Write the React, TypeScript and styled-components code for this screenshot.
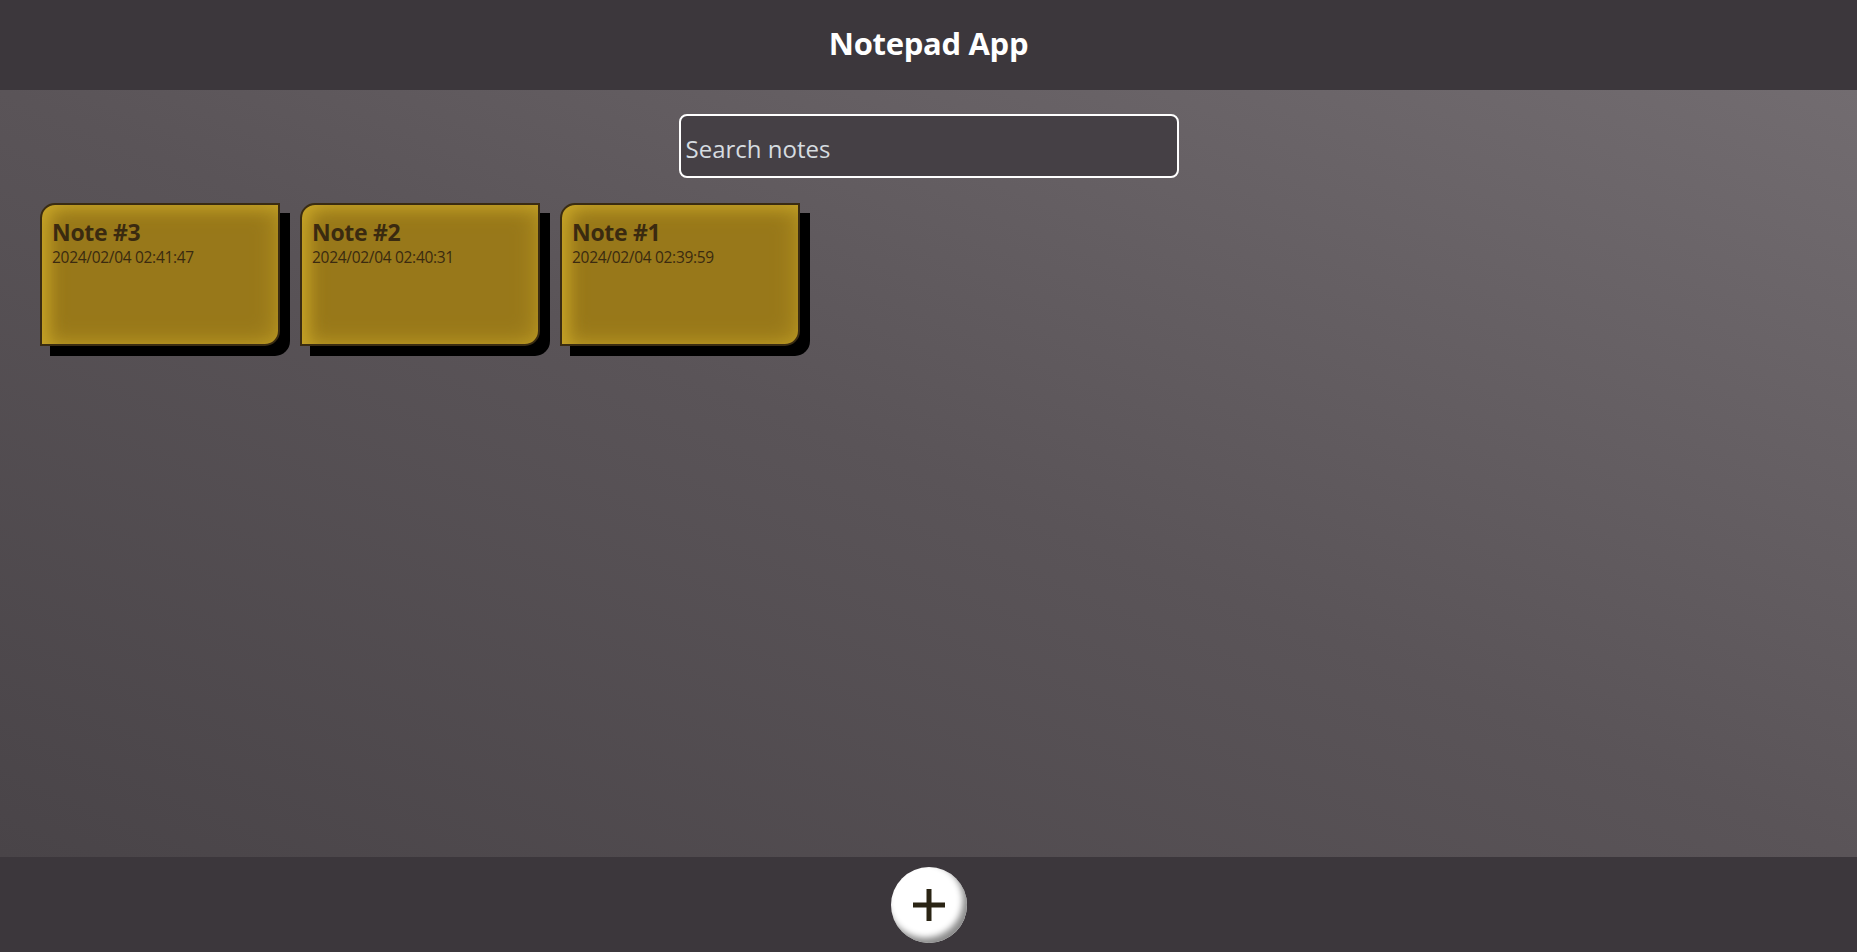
import React from "react";
import styled, { createGlobalStyle } from "styled-components";

const GlobalStyle = createGlobalStyle`
  html, body { margin: 0; padding: 0; height: 100%; }
  body { font-family: "Open Sans", "Noto Sans", sans-serif; }
  #root { height: 100%; }
  * { box-sizing: border-box; }
`;

const Page = styled.div`
  height: 952px;
  display: flex;
  flex-direction: column;
`;

const Header = styled.header`
  height: 90px;
  flex: 0 0 90px;
  background: #3c373c;
  display: flex;
  align-items: center;
  justify-content: center;
`;

const Title = styled.h1`
  margin: 0;
  color: #ffffff;
  font-size: 31px;
  font-weight: 700;
  letter-spacing: -0.3px;
  padding-bottom: 4px;
`;

const Main = styled.main`
  flex: 1;
  background: linear-gradient(to top right, #494448 0%, #5a5458 50%, #726c70 100%);
  padding: 24px 40px;
  display: flex;
  flex-direction: column;
  align-items: stretch;
  gap: 25px;
`;

const SearchRow = styled.div`
  display: flex;
  justify-content: center;
`;

const SearchInput = styled.input`
  width: 500px;
  height: 64px;
  background: #454045;
  border: 2px solid #ffffff;
  border-radius: 8px;
  padding: 4px 5px 0;
  font-family: "Open Sans", "Noto Sans", sans-serif;
  font-size: 24px;
  color: #e0e0e0;
  outline: none;
  &::placeholder { color: #d6dce0; }
`;

const NotesGrid = styled.div`
  display: flex;
  flex-wrap: wrap;
  gap: 20px;
`;

const Card = styled.div`
  width: 240px;
  height: 143px;
  border: 2px solid #3a2c12;
  border-radius: 15px 0 15px 0;
  background: #98781a;
  box-shadow: inset 8px 4px 18px -4px #c9a628, inset 0 0 24px #bb9a24, 10px 10px 0 #000000;
  padding: 12px 10px;
  color: #3a2a10;
`;

const CardTitle = styled.div`
  font-size: 23px;
  font-weight: 700;
  line-height: 30px;
  letter-spacing: -0.3px;
`;

const CardDate = styled.div`
  font-size: 15.5px;
  line-height: 20px;
  letter-spacing: -0.3px;
`;

const Footer = styled.footer`
  height: 95px;
  flex: 0 0 95px;
  background: #3c373c;
  display: flex;
  align-items: center;
  justify-content: center;
`;

const AddButton = styled.button`
  width: 76px;
  height: 76px;
  border-radius: 50%;
  border: none;
  background: #ffffff;
  box-shadow: inset -4px -5px 6px #8a8a8a;
  display: flex;
  align-items: center;
  justify-content: center;
  padding: 0;
  cursor: pointer;
`;

const notes = [
  { title: "Note #3", date: "2024/02/04 02:41:47" },
  { title: "Note #2", date: "2024/02/04 02:40:31" },
  { title: "Note #1", date: "2024/02/04 02:39:59" },
];

export default function App() {
  return (
    <>
      <GlobalStyle />
      <Page>
        <Header>
          <Title>Notepad App</Title>
        </Header>
        <Main>
          <SearchRow>
            <SearchInput placeholder="Search notes" />
          </SearchRow>
          <NotesGrid>
            {notes.map((n) => (
              <Card key={n.title}>
                <CardTitle>{n.title}</CardTitle>
                <CardDate>{n.date}</CardDate>
              </Card>
            ))}
          </NotesGrid>
        </Main>
        <Footer>
          <AddButton aria-label="Add note">
            <svg width="32" height="32" viewBox="0 0 32 32">
              <rect x="13.5" y="0" width="5" height="32" fill="#2a2414" />
              <rect x="0" y="13.5" width="32" height="5" fill="#2a2414" />
            </svg>
          </AddButton>
        </Footer>
      </Page>
    </>
  );
}
